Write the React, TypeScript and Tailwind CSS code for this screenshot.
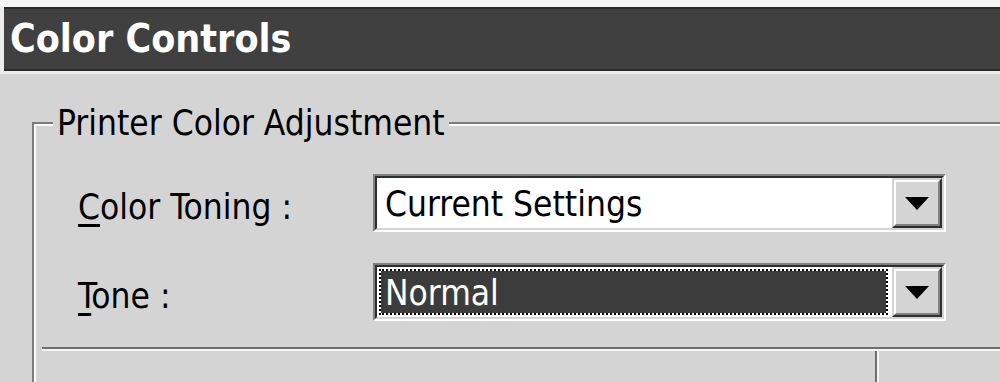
import React from "react";

function Arrow() {
  return (
    <svg width="24" height="13" viewBox="0 0 24 13">
      <polygon points="0,0 24,0 12,13" fill="#000" />
    </svg>
  );
}

function Combo({ value, selected }: { value: string; selected?: boolean }) {
  return (
    <div className="border-2 border-t-[#808080] border-l-[#808080] border-b-white border-r-white">
      <div className="h-[54px] flex border-2 border-t-[#2e2e2e] border-l-[#2e2e2e] border-b-[#d4d4d4] border-r-[#d4d4d4] bg-white">
        <div className="flex-1 flex items-stretch p-[2px] pr-[4px]">
          {selected ? (
            <div className="flex-1 flex items-center pl-[4px] pt-[3px] border-2 border-dotted border-black bg-[#3c3c3c] bg-clip-padding text-white">
              {value}
            </div>
          ) : (
            <div className="flex-1 flex items-center pl-[6px] pt-[3px] text-black">{value}</div>
          )}
        </div>
        <div className="w-[50px] border-2 border-t-[#d4d4d4] border-l-[#d4d4d4] border-b-[#2e2e2e] border-r-[#2e2e2e]">
          <div className="h-full flex items-center justify-center bg-[#d4d4d4] border-2 border-t-white border-l-white border-b-[#808080] border-r-[#808080]">
            <Arrow />
          </div>
        </div>
      </div>
    </div>
  );
}

export default function App() {
  return (
    <div className="w-[1000px] h-[382px] overflow-hidden bg-[#d4d4d4] font-['DejaVu_Sans_Condensed','DejaVu_Sans',sans-serif] text-[35px] text-black">
      <div className="h-[7px] bg-[#f4f4f4]" />
      <div className="pl-[4px] bg-[#ececec]">
        <div className="h-[64px] bg-[#404040] border-t-2 border-b-2 border-[#2a2a2a] flex items-center pl-[6px] text-white font-bold text-[39px]">
          Color Controls
        </div>
      </div>
      <div className="h-[3px] bg-[#ececec]" />
      <fieldset className="ml-[32px] mt-[30px] w-[1100px] h-[400px] border-2 border-[#7c7c7c] shadow-[inset_2px_2px_0_#fafafa] pl-[44px] pt-[32px]">
        <legend className="-ml-[25px] px-[4px] bg-[#d4d4d4] leading-[38px]">Printer Color Adjustment</legend>
        <div className="grid grid-cols-[295px_573px] gap-y-[31px] items-center">
          <div className="pt-[8px] leading-[42px]">
            <span className="underline decoration-[3px] underline-offset-[5px]">C</span>olor Toning :
          </div>
          <Combo value="Current Settings" />
          <div className="pt-[8px] leading-[42px]">
            <span className="underline decoration-[3px] underline-offset-[5px]">T</span>one :
          </div>
          <Combo value="Normal" selected />
        </div>
        <div className="ml-[-36px] mt-[26px] border-t-2 border-t-[#6e6e6e] border-b-2 border-b-[#f4f4f4]" />
        <div className="ml-[-36px] flex h-[40px]">
          <div className="w-[835px] border-r-2 border-r-[#6e6e6e]" />
          <div className="w-[2px] bg-[#f4f4f4]" />
        </div>
      </fieldset>
    </div>
  );
}
